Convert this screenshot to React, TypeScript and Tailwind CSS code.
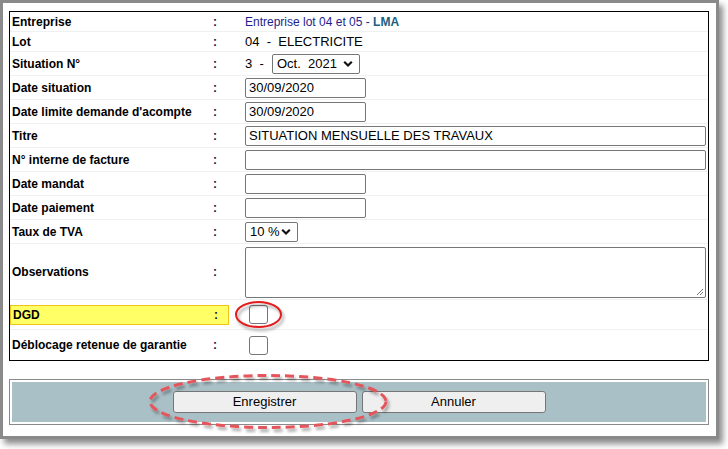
import React from 'react'

const rows = [
  { label: 'Entreprise', h: 'h-[20px]', kind: 'entreprise' },
  { label: 'Lot', h: 'h-[20px]', kind: 'lot' },
  { label: 'Situation N°', h: 'h-[24px]', kind: 'situation' },
  { label: 'Date situation', h: 'h-[24px]', kind: 'date', value: '30/09/2020' },
  { label: "Date limite demande d'acompte", h: 'h-[24px]', kind: 'date', value: '30/09/2020' },
  { label: 'Titre', h: 'h-[24px]', kind: 'wide', value: 'SITUATION MENSUELLE DES TRAVAUX' },
  { label: 'N° interne de facture', h: 'h-[24px]', kind: 'wide', value: '' },
  { label: 'Date mandat', h: 'h-[24px]', kind: 'date', value: '' },
  { label: 'Date paiement', h: 'h-[24px]', kind: 'date', value: '' },
  { label: 'Taux de TVA', h: 'h-[24px]', kind: 'tva' },
  { label: 'Observations', h: 'h-[56px]', kind: 'textarea' },
  { label: 'DGD', h: 'h-[30px]', kind: 'dgd' },
  { label: 'Déblocage retenue de garantie', h: 'h-[30px]', kind: 'check' },
]

function Chevron() {
  return (
    <svg width="10" height="7" viewBox="0 0 10 7" className="absolute right-[6px] top-1/2 -translate-y-1/2">
      <path d="M1.2 1.2 L5 5 L8.8 1.2" fill="none" stroke="#111" strokeWidth="2.2" />
    </svg>
  )
}

function FakeSelect({ text, w }: { text: string; w: string }) {
  return (
    <div className={`relative h-[20px] ${w} border border-[#767676] rounded-[2px] bg-white pl-[4px] text-[13px] leading-[18px] text-black whitespace-pre`}>
      {text}
      <Chevron />
    </div>
  )
}

function Box() {
  return <div className="w-[19px] h-[19px] border border-[#767676] rounded-[3px] bg-white ml-[4px]" />
}

function Value({ row }: { row: any }) {
  switch (row.kind) {
    case 'entreprise':
      return (
        <span className="text-[12px] text-[#1e1e8c]">
          Entreprise lot 04 et 05 - <b className="text-[12px] text-[#1b5e82]">LMA</b>
        </span>
      )
    case 'lot':
      return <span className="text-[13px] text-black whitespace-pre">04  -  ELECTRICITE</span>
    case 'situation':
      return (
        <div className="flex items-center">
          <span className="text-[13px] text-black whitespace-pre w-[27px]">3  -</span>
          <FakeSelect text="Oct.  2021" w="w-[88px]" />
        </div>
      )
    case 'date':
      return (
        <div className="h-[20px] w-[121px] border border-[#767676] rounded-[2px] pl-[3px] text-[13px] leading-[18px] text-black">
          {row.value}
        </div>
      )
    case 'wide':
      return (
        <div className="h-[20px] w-[461px] border border-[#767676] rounded-[2px] pl-[3px] text-[13px] leading-[18px] text-black">
          {row.value}
        </div>
      )
    case 'tva':
      return <FakeSelect text="10 %" w="w-[53px]" />
    case 'textarea':
      return (
        <div className="relative h-[51px] w-[461px] border border-[#767676] rounded-[2px] mt-[3px]">
          <svg width="8" height="8" viewBox="0 0 8 8" className="absolute right-[1px] bottom-[1px]">
            <path d="M7 1 L1 7 M7 4 L4 7" stroke="#777" strokeWidth="1" />
          </svg>
        </div>
      )
    default:
      return <Box />
  }
}

export default function App() {
  return (
    <div className="w-[728px] h-[449px] bg-white relative overflow-hidden" style={{ fontFamily: '"Liberation Sans", Arial, sans-serif' }}>
      <div className="w-[719px] h-[439px] border-[3px] border-[#8a8a8a] bg-white pt-[8px] pl-[6px] shadow-[4px_5px_6px_rgba(0,0,0,0.45)]">
        <div className="w-[700px] border border-black flex flex-col">
          {rows.map((row, i) => (
            <div
              key={i}
              className={`${row.h} flex items-center ${i < rows.length - 1 ? 'border-b border-[#eef1f1]' : ''}`}
            >
              <div
                className={`w-[219px] h-[20px] flex items-center pl-[2px] text-[12px] font-bold text-black ${
                  row.kind === 'dgd' ? 'bg-[#ffff66] border border-[#f0c419] pl-[1px] mt-[1px]' : ''
                }`}
              >
                <span className="w-[201px]">{row.label}</span>
                <span className="text-[#10203a]">:</span>
              </div>
              <div className={`pl-[16px] flex items-center ${row.kind === 'textarea' ? 'self-start' : ''}`}>
                <Value row={row} />
              </div>
            </div>
          ))}
        </div>
        <div className="w-[700px] mt-[18px] border border-[#8a8a8a] p-[2px]">
          <div className="h-[40px] bg-[#a9c0c6] flex items-center justify-center gap-[5px]">
            <button className="w-[184px] h-[22px] bg-[#efefef] border border-[#767676] rounded-[3px] text-[13px] text-black">
              Enregistrer
            </button>
            <button className="w-[184px] h-[22px] bg-[#efefef] border border-[#767676] rounded-[3px] text-[13px] text-black">
              Annuler
            </button>
          </div>
        </div>
      </div>

      <svg width="728" height="449" className="absolute left-0 top-0 pointer-events-none">
        <defs>
          <filter id="sh" x="-20%" y="-40%" width="140%" height="180%">
            <feDropShadow dx="2" dy="3" stdDeviation="1.5" floodColor="#000" floodOpacity="0.35" />
          </filter>
        </defs>
        <ellipse cx="258.5" cy="314.5" rx="22.5" ry="12.5" fill="none" stroke="#e31b1b" strokeWidth="2" filter="url(#sh)" />
        <ellipse cx="268" cy="401.5" rx="118" ry="26" fill="none" stroke="#e4555c" strokeWidth="3" strokeDasharray="9 5" filter="url(#sh)" />
      </svg>
    </div>
  )
}
